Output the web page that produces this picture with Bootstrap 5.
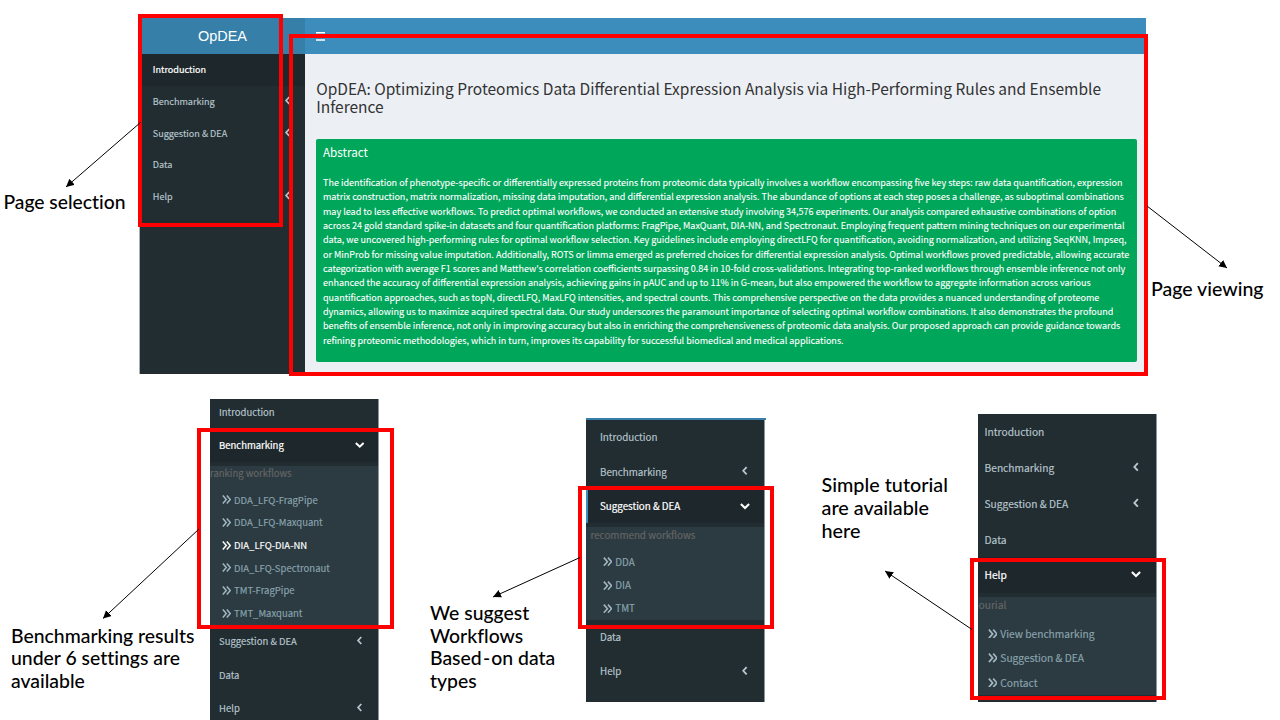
<!DOCTYPE html>
<html lang="en">
<head>
<meta charset="utf-8">
<meta name="viewport" content="width=device-width, initial-scale=1">
<title>OpDEA overview</title>
<link href="https://cdn.jsdelivr.net/npm/bootstrap@5.3.0/dist/css/bootstrap.min.css" rel="stylesheet">
<style>
  body { background:#fff; font-family:"Noto Sans CJK SC","Open Sans",sans-serif; }
  .sheet { width:1280px; height:720px; }
  .note { font-family:Lato,sans-serif; font-weight:500; font-size:19.4px; line-height:22.4px; color:#000; white-space:nowrap; font-variant-ligatures:none; }
  .note-a { width:139px; padding:173px 0 0 3.4px; font-size:19.3px; }
  .note-b { padding:260px 0 0 5px; font-size:19.55px; }
  .note-1 { width:210px; padding:226px 0 0 11px; }
  .note-2 { width:207px; padding:203px 0 0 51px; line-height:22.6px; }
  .note-3 { width:213px; padding:74.4px 0 0 56.5px; font-size:19.8px; line-height:22.6px; }
  .hy { padding:0 1.2px; }

  .shot { width:1007px; height:356px; border-left:1px solid #a9b0b4; background:#ecf0f5; }
  .topbar { height:36px; background:#3c8dbc; color:#fff; }
  .brand { width:165px; background:#367fa9; font:14.45px "Liberation Sans",sans-serif; }
  .side { width:165px; background:#222d32; }
  .headline { font-size:15.5px; line-height:18.6px; color:#333; white-space:nowrap; font-weight:400; }
  .headline span { display:block; }
  .abstract { margin-left:-.5px; width:821.5px; height:222.6px; border-radius:2px; background:#00a65a; color:#fff; padding:4px 0 0 7.3px; }
  .abstract h2 { font-size:11.7px; line-height:17px; margin:0 0 15.9px; font-weight:400; }
  .abstract span { display:block; font-size:9.04px; line-height:14.36px; white-space:nowrap; -webkit-text-stroke:.1px currentColor; }

  .menu { color:#b8c7ce; white-space:nowrap; font-size:var(--fs); -webkit-text-stroke:.15px currentColor; }
  .item { height:var(--rh); padding:0 var(--pr) 0 var(--pl); }
  .item svg { margin-top:-2px; }
  .item.on { background:#1e282c; color:#fff; -webkit-text-stroke-width:.2px; }
  .item.on svg { margin-top:-1px; }
  .subs { background:#2c3b41; color:#8aa4af; }
  .subs .cap { color:#666; height:16px; line-height:16px; }
  .sub { height:var(--sh); padding-left:var(--sl); }
  .sub svg { margin-right:3px; color:#a3b8c1; }
  .sub.on, .sub.on svg { color:#fff; }

  .m0 { --fs:9.09px; --rh:31.65px; --pl:12.8px; --pr:13.2px; }
  .m0 .item { padding-top:.8px; }
  .m1 { --fs:9.5px; --rh:33.3px; --pl:9px; --pr:13.8px; --sh:22.68px; --sl:12px; width:169px; height:321px; }
  .m2 { --fs:9.8px; --rh:34.2px; --pl:14px; --pr:14.3px; --sh:23.2px; --sl:17px; width:179px; height:284px; margin-top:19px; }
  .m3 { --fs:10.23px; --rh:35.75px; --pl:6.5px; --pr:14.8px; --sh:24.5px; --sl:9.5px; width:179px; height:288px; margin-top:15px; }
  .panel { background:#222d32; border-right:1px solid #8d979b; }
  .m1 .rows { margin-top:-3.7px; }
  .m1 .subs { margin-top:3.6px; height:159.3px; }
  .m1 .cap { margin-bottom:7.1px; line-height:15px; }
  .m2 .rows { border-top:2px solid #367fa9; margin-right:-2px; padding-right:2px; padding-top:.6px; }
  .m2 .item.on { box-shadow:inset 2px 0 #3c8dbc; }
  .m2 .subs { margin-top:3.8px; height:93.2px; }
  .m2 .cap { padding-left:4.5px; margin-bottom:7.5px; line-height:16px; }
  .m3 .rows { padding-top:.1px; }
  .m3 .subs { margin-top:4px; height:98px; }
  .m3 .cap { padding-left:.5px; margin-bottom:8.5px; }
  .overlay { pointer-events:none; }
</style>
</head>
<body>
<svg width="0" height="0" class="position-absolute">
  <symbol id="left" viewBox="0 0 10 10"><path d="M7 1.100 3.400 5l3.600 3.900" fill="none" stroke="currentColor" stroke-width="1.9"/></symbol>
  <symbol id="down" viewBox="0 0 10 10"><path d="M.9 3.100 5 7l4.100-3.900" fill="none" stroke="currentColor" stroke-width="2.1"/></symbol>
  <symbol id="dbl" viewBox="0 0 9 9"><path d="M.8.6 4.300 4.500.8 8.400M4.800.6l3.500 3.900-3.500 3.900" fill="none" stroke="currentColor" stroke-width="1.5"/></symbol>
</svg>
<main class="sheet position-relative overflow-hidden">
  <section class="d-flex" style="padding-top:18px">
    <div class="note note-a">Page selection</div>
    <div class="shot d-flex flex-column">
      <header class="topbar d-flex">
        <div class="brand d-flex align-items-center justify-content-center">OpDEA</div>
        <svg width="9" height="10" style="margin:14px 0 0 11px"><path d="M0 .8h9M0 5h9M0 8h9" stroke="#fff" stroke-width="1.6"/></svg>
      </header>
      <div class="d-flex flex-grow-1">
        <nav class="side menu m0">
          <div class="item on d-flex align-items-center">Introduction</div>
          <div class="item d-flex align-items-center justify-content-between">Benchmarking<svg width="9" height="9"><use href="#left"/></svg></div>
          <div class="item d-flex align-items-center justify-content-between">Suggestion &amp; DEA<svg width="9" height="9"><use href="#left"/></svg></div>
          <div class="item d-flex align-items-center">Data</div>
          <div class="item d-flex align-items-center justify-content-between">Help<svg width="9" height="9"><use href="#left"/></svg></div>
        </nav>
        <div style="padding:24.8px 0 0 11.2px">
          <h1 class="headline" style="margin-bottom:23px"><span>OpDEA: Optimizing Proteomics Data Differential Expression Analysis via High-Performing Rules and Ensemble</span><span>Inference</span></h1>
          <div class="abstract">
            <h2>Abstract</h2>
            <span>The identification of phenotype-specific or differentially expressed proteins from proteomic data typically involves a workflow encompassing five key steps: raw data quantification, expression</span>
            <span>matrix construction, matrix normalization, missing data imputation, and differential expression analysis. The abundance of options at each step poses a challenge, as suboptimal combinations</span>
            <span>may lead to less effective workflows. To predict optimal workflows, we conducted an extensive study involving 34,576 experiments. Our analysis compared exhaustive combinations of option</span>
            <span>across 24 gold standard spike-in datasets and four quantification platforms: FragPipe, MaxQuant, DIA-NN, and Spectronaut. Employing frequent pattern mining techniques on our experimental</span>
            <span>data, we uncovered high-performing rules for optimal workflow selection. Key guidelines include employing directLFQ for quantification, avoiding normalization, and utilizing SeqKNN, Impseq,</span>
            <span>or MinProb for missing value imputation. Additionally, ROTS or limma emerged as preferred choices for differential expression analysis. Optimal workflows proved predictable, allowing accurate</span>
            <span>categorization with average F1 scores and Matthew's correlation coefficients surpassing 0.84 in 10-fold cross-validations. Integrating top-ranked workflows through ensemble inference not only</span>
            <span>enhanced the accuracy of differential expression analysis, achieving gains in pAUC and up to 11% in G-mean, but also empowered the workflow to aggregate information across various</span>
            <span>quantification approaches, such as topN, directLFQ, MaxLFQ intensities, and spectral counts. This comprehensive perspective on the data provides a nuanced understanding of proteome</span>
            <span>dynamics, allowing us to maximize acquired spectral data. Our study underscores the paramount importance of selecting optimal workflow combinations. It also demonstrates the profound</span>
            <span>benefits of ensemble inference, not only in improving accuracy but also in enriching the comprehensiveness of proteomic data analysis. Our proposed approach can provide guidance towards</span>
            <span>refining proteomic methodologies, which in turn, improves its capability for successful biomedical and medical applications.</span>
          </div>
        </div>
      </div>
    </div>
    <div class="note note-b">Page viewing</div>
  </section>

  <section class="d-flex align-items-start" style="margin-top:25px">
    <div class="note note-1">Benchmarking results<br>under 6 settings are<br>available</div>
    <nav class="panel menu m1 overflow-hidden"><div class="rows">
      <div class="item d-flex align-items-center">Introduction</div>
      <div class="item on d-flex align-items-center justify-content-between">Benchmarking<svg width="9.5" height="9.5"><use href="#down"/></svg></div>
      <div class="subs">
        <div class="cap">ranking workflows</div>
        <div class="sub d-flex align-items-center"><svg width="9" height="9"><use href="#dbl"/></svg>DDA_LFQ-FragPipe</div>
        <div class="sub d-flex align-items-center"><svg width="9" height="9"><use href="#dbl"/></svg>DDA_LFQ-Maxquant</div>
        <div class="sub on d-flex align-items-center"><svg width="9" height="9"><use href="#dbl"/></svg>DIA_LFQ-DIA-NN</div>
        <div class="sub d-flex align-items-center"><svg width="9" height="9"><use href="#dbl"/></svg>DIA_LFQ-Spectronaut</div>
        <div class="sub d-flex align-items-center"><svg width="9" height="9"><use href="#dbl"/></svg>TMT-FragPipe</div>
        <div class="sub d-flex align-items-center"><svg width="9" height="9"><use href="#dbl"/></svg>TMT_Maxquant</div>
      </div>
      <div class="item d-flex align-items-center justify-content-between">Suggestion &amp; DEA<svg width="9" height="9"><use href="#left"/></svg></div>
      <div class="item d-flex align-items-center">Data</div>
      <div class="item d-flex align-items-center justify-content-between">Help<svg width="9" height="9"><use href="#left"/></svg></div>
    </div></nav>

    <div class="note note-2">We suggest<br>Workflows<br>Based<span class="hy">-</span>on data<br>types</div>
    <nav class="panel menu m2"><div class="rows">
      <div class="item d-flex align-items-center">Introduction</div>
      <div class="item d-flex align-items-center justify-content-between">Benchmarking<svg width="9.5" height="9.5"><use href="#left"/></svg></div>
      <div class="item on d-flex align-items-center justify-content-between">Suggestion &amp; DEA<svg width="10" height="10"><use href="#down"/></svg></div>
      <div class="subs">
        <div class="cap">recommend workflows</div>
        <div class="sub d-flex align-items-center"><svg width="9.3" height="9.3"><use href="#dbl"/></svg>DDA</div>
        <div class="sub d-flex align-items-center"><svg width="9.3" height="9.3"><use href="#dbl"/></svg>DIA</div>
        <div class="sub d-flex align-items-center"><svg width="9.3" height="9.3"><use href="#dbl"/></svg>TMT</div>
      </div>
      <div class="item d-flex align-items-center">Data</div>
      <div class="item d-flex align-items-center justify-content-between">Help<svg width="9.5" height="9.5"><use href="#left"/></svg></div>
    </div></nav>

    <div class="note note-3">Simple tutorial<br>are available<br>here</div>
    <nav class="panel menu m3"><div class="rows">
      <div class="item d-flex align-items-center">Introduction</div>
      <div class="item d-flex align-items-center justify-content-between">Benchmarking<svg width="9.8" height="9.8"><use href="#left"/></svg></div>
      <div class="item d-flex align-items-center justify-content-between">Suggestion &amp; DEA<svg width="9.8" height="9.8"><use href="#left"/></svg></div>
      <div class="item d-flex align-items-center">Data</div>
      <div class="item on d-flex align-items-center justify-content-between">Help<svg width="10" height="10"><use href="#down"/></svg></div>
      <div class="subs">
        <div class="cap">ourial</div>
        <div class="sub d-flex align-items-center"><svg width="9.8" height="9.8"><use href="#dbl"/></svg>View benchmarking</div>
        <div class="sub d-flex align-items-center"><svg width="9.8" height="9.8"><use href="#dbl"/></svg>Suggestion &amp; DEA</div>
        <div class="sub d-flex align-items-center"><svg width="9.8" height="9.8"><use href="#dbl"/></svg>Contact</div>
      </div>
    </div></nav>
  </section>

  <!-- call-out frames and arrows lying over the panels -->
  <svg class="overlay position-absolute top-0 start-0" width="1280" height="720">
    <defs><marker id="tip" markerUnits="userSpaceOnUse" markerWidth="9" markerHeight="9" refX="8" refY="4" orient="auto"><path d="M0 0 8 4 0 8z"/></marker></defs>
    <g fill="none" stroke="#f00" stroke-width="4">
      <rect x="140" y="16" width="141" height="209"/>
      <rect x="291" y="36" width="855" height="338"/>
      <rect x="199" y="430" width="193" height="197"/>
      <rect x="580" y="488" width="192" height="139"/>
      <rect x="972" y="560" width="192" height="138"/>
    </g>
    <g stroke="#000" stroke-width="1">
      <path d="M141 122 66 187" marker-end="url(#tip)"/>
      <path d="M1147 206 1227 268" marker-end="url(#tip)"/>
      <path d="M199 529 103 618.500" marker-end="url(#tip)"/>
      <path d="M580 557.500 493 597" marker-end="url(#tip)"/>
      <path d="M972 629.500 885 571" marker-end="url(#tip)"/>
    </g>
  </svg>
</main>
<script src="https://cdn.jsdelivr.net/npm/bootstrap@5.3.0/dist/js/bootstrap.bundle.min.js"></script>
</body>
</html>
